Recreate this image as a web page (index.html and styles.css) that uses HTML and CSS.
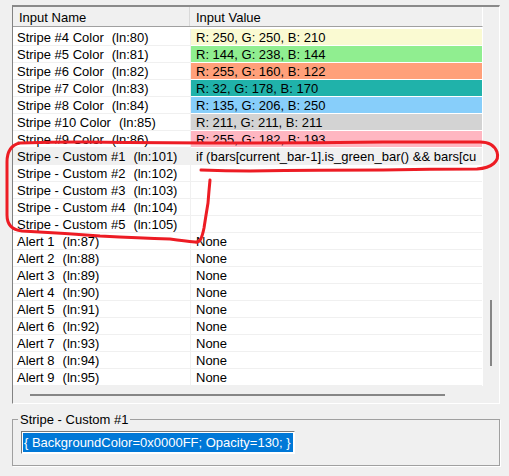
FILE: index.html
```html
<!DOCTYPE html>
<html>
<head>
<meta charset="utf-8">
<title>Inputs</title>
<link rel="stylesheet" href="styles.css">
</head>
<body>
<div class="listbox">
  <div class="list-main">
    <div class="header">
      <div class="hcell hname">Input Name</div>
      <div class="hcell hvalue">Input Value</div>
    </div>
    <div class="rows">
      <div class="row"><div class="cell name">Stripe #4 Color<span class="ln">(ln:80)</span></div><div class="cell value c-lgy">R: 250, G: 250, B: 210</div></div>
      <div class="row"><div class="cell name">Stripe #5 Color<span class="ln">(ln:81)</span></div><div class="cell value c-lgr">R: 144, G: 238, B: 144</div></div>
      <div class="row"><div class="cell name">Stripe #6 Color<span class="ln">(ln:82)</span></div><div class="cell value c-lsa">R: 255, G: 160, B: 122</div></div>
      <div class="row"><div class="cell name">Stripe #7 Color<span class="ln">(ln:83)</span></div><div class="cell value c-lse">R: 32, G: 178, B: 170</div></div>
      <div class="row"><div class="cell name">Stripe #8 Color<span class="ln">(ln:84)</span></div><div class="cell value c-lsk">R: 135, G: 206, B: 250</div></div>
      <div class="row"><div class="cell name">Stripe #10 Color<span class="ln">(ln:85)</span></div><div class="cell value c-lgray">R: 211, G: 211, B: 211</div></div>
      <div class="row"><div class="cell name">Stripe #9 Color<span class="ln">(ln:86)</span></div><div class="cell value c-lpink">R: 255, G: 182, B: 193</div></div>
      <div class="row selected"><div class="cell name">Stripe - Custom #1<span class="ln">(ln:101)</span></div><div class="cell value">if (bars[current_bar-1].is_green_bar() &amp;&amp; bars[cu</div></div>
      <div class="row"><div class="cell name">Stripe - Custom #2<span class="ln">(ln:102)</span></div><div class="cell value"></div></div>
      <div class="row"><div class="cell name">Stripe - Custom #3<span class="ln">(ln:103)</span></div><div class="cell value"></div></div>
      <div class="row"><div class="cell name">Stripe - Custom #4<span class="ln">(ln:104)</span></div><div class="cell value"></div></div>
      <div class="row"><div class="cell name">Stripe - Custom #5<span class="ln">(ln:105)</span></div><div class="cell value"></div></div>
      <div class="row"><div class="cell name">Alert 1<span class="ln">(ln:87)</span></div><div class="cell value">None</div></div>
      <div class="row"><div class="cell name">Alert 2<span class="ln">(ln:88)</span></div><div class="cell value">None</div></div>
      <div class="row"><div class="cell name">Alert 3<span class="ln">(ln:89)</span></div><div class="cell value">None</div></div>
      <div class="row"><div class="cell name">Alert 4<span class="ln">(ln:90)</span></div><div class="cell value">None</div></div>
      <div class="row"><div class="cell name">Alert 5<span class="ln">(ln:91)</span></div><div class="cell value">None</div></div>
      <div class="row"><div class="cell name">Alert 6<span class="ln">(ln:92)</span></div><div class="cell value">None</div></div>
      <div class="row"><div class="cell name">Alert 7<span class="ln">(ln:93)</span></div><div class="cell value">None</div></div>
      <div class="row"><div class="cell name">Alert 8<span class="ln">(ln:94)</span></div><div class="cell value">None</div></div>
      <div class="row"><div class="cell name">Alert 9<span class="ln">(ln:95)</span></div><div class="cell value">None</div></div>
    </div>
  </div>
  <div class="vscroll"><div class="vthumb"></div></div>
  <div class="hscroll"><div class="hthumb"></div></div>
  <div class="corner"></div>
</div>

<fieldset class="group">
  <legend class="group-label">Stripe - Custom #1</legend>
  <div class="textbox"><span class="selection">{ BackgroundColor=0x0000FF; Opacity=130; }</span></div>
</fieldset>

<svg class="annot" width="509" height="476" viewBox="0 0 509 476">
  <path d="M201 170 Q 226 171 250 171 Q 320 170 383 170 Q 430 169 477 169 C 492 168 500 161 497 152 C 494 144 488 142 480 142 Q 430 142 383 142 Q 316 143 250 143 Q 170 143 83 142 Q 50 142 20 143 C 11 145 7 152 7 162 L 7 215 C 7 225 12 230 22 231 Q 60 233 100 236 Q 140 238 170 239 Q 185 241 195 242 C 200 243 202 238 204 228 Q 206 215 208 203 Q 209 190 210 180" fill="none" stroke="#ed1c24" stroke-width="3" stroke-linecap="round" stroke-linejoin="round"/>
</svg>
</body>
</html>
```

FILE: styles.css
```css
html, body {
  margin: 0;
  padding: 0;
}

body {
  position: relative;
  width: 509px;
  height: 476px;
  overflow: hidden;
  background: #f0f0f0;
  font-family: "Liberation Sans", Arial, sans-serif;
  font-size: 13px;
  color: #000;
}

.listbox {
  margin: 5px 0 0 12px;
  width: 488px;
  height: 399px;
  box-sizing: border-box;
  border-style: solid;
  border-width: 2px 1px 1px 1px;
  border-color: #8a8a8a #ffffff #ffffff #828282;
  background: #f0f0f0;
  display: grid;
  grid-template-columns: 470px 16px;
  grid-template-rows: 379px 17px;
}

.list-main {
  grid-column: 1;
  grid-row: 1;
  background: #fff;
  display: flex;
  flex-direction: column;
  overflow: hidden;
}

.header {
  display: flex;
  height: 19px;
  flex: none;
  background: #f0f0f0;
  border-bottom: 1px solid #a0a0a0;
  border-right: 1px solid #fff;
  margin-bottom: 2px;
}

.hcell {
  box-sizing: border-box;
  height: 19px;
  padding: 2px 0 0 6px;
  line-height: 17px;
  white-space: nowrap;
}

.hname {
  width: 177px;
  border-right: 1px solid #d9d9d9;
}

.hvalue {
  padding-left: 6px;
}

.rows {
  display: flex;
  flex-direction: column;
}

.row {
  display: flex;
  height: 17px;
}

.cell {
  box-sizing: border-box;
  height: 17px;
  padding: 1px 0 0 4px;
  line-height: 16px;
  border-bottom: 1px solid #f0f0f0;
  white-space: pre;
  overflow: hidden;
}

.name {
  width: 178px;
  border-right: 1px solid #f0f0f0;
}

.ln {
  margin-left: 8px;
}

.value {
  width: 291px;
  padding-left: 5px;
}

.c-lgy { background: rgb(250, 250, 210); border-bottom-color: #fff; }
.c-lgr { background: rgb(144, 238, 144); border-bottom-color: #fff; }
.c-lsa { background: rgb(255, 160, 122); border-bottom-color: #fff; }
.c-lse { background: rgb(32, 178, 170); border-bottom-color: #fff; }
.c-lsk { background: rgb(135, 206, 250); border-bottom-color: #fff; }
.c-lgray { background: rgb(211, 211, 211); border-bottom-color: #fff; }
.c-lpink { background: rgb(255, 182, 193); border-bottom-color: #fff; }

.row.selected .cell {
  background: #f0f0f0;
}

.vscroll {
  grid-column: 2;
  grid-row: 1;
  background: #f0f0f0;
}

.vthumb {
  width: 2px;
  height: 66px;
  margin: 293px 0 0 7px;
  background: #868686;
}

.hscroll {
  grid-column: 1;
  grid-row: 2;
  background: #f0f0f0;
}

.hthumb {
  width: 415px;
  height: 2px;
  margin: 8px 0 0 17px;
  background: #868686;
}

.corner {
  grid-column: 2;
  grid-row: 2;
  background: #f0f0f0;
}

.group {
  margin: 8px 0 0 12px;
  width: 488px;
  min-width: 0;
  box-sizing: border-box;
  border: 1px solid #a0a0a0;
  box-shadow: 1px 1px 0 #ffffff;
  padding: 4px 0 11px 0;
}

.group-label {
  margin-left: 5px;
  padding: 0 2px;
  line-height: 15px;
}

.textbox {
  margin-left: 8px;
  width: 274px;
  height: 23px;
  box-sizing: border-box;
  border: 1px solid;
  border-color: #7a7a7a #ffffff #ffffff #7a7a7a;
  background: #fff;
  padding: 1px;
  display: flex;
}

.selection {
  flex: 1;
  background: #0078d7;
  color: #fff;
  line-height: 19px;
  padding-left: 1px;
  white-space: pre;
  overflow: hidden;
}

.annot {
  position: absolute;
  left: 0;
  top: 0;
  pointer-events: none;
}
```
